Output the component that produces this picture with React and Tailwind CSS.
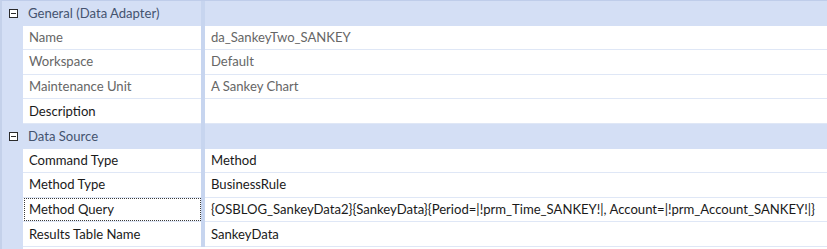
import React from 'react';

const sections = [
  {
    title: 'General (Data Adapter)',
    rows: [
      { label: 'Name', value: 'da_SankeyTwo_SANKEY', readOnly: true },
      { label: 'Workspace', value: 'Default', readOnly: true },
      { label: 'Maintenance Unit', value: 'A Sankey Chart', readOnly: true },
      { label: 'Description', value: '' },
    ],
  },
  {
    title: 'Data Source',
    rows: [
      { label: 'Command Type', value: 'Method' },
      { label: 'Method Type', value: 'BusinessRule' },
      {
        label: 'Method Query',
        value: '{OSBLOG_SankeyData2}{SankeyData}{Period=|!prm_Time_SANKEY!|, Account=|!prm_Account_SANKEY!|}',
        focused: true,
      },
      { label: 'Results Table Name', value: 'SankeyData' },
    ],
  },
];

const CollapseBox = () => (
  <span className="flex h-[9px] w-[9px] items-center justify-center border border-[#2b2b2b] bg-white">
    <span className="block h-[1px] w-[5px] bg-[#2b2b2b]" />
  </span>
);

const SectionHeader = ({ title }) => (
  <div className="flex h-[24.6px] bg-[#d4dff5]">
    <div className="flex w-[21px] shrink-0 items-center justify-center pl-[2px]">
      <CollapseBox />
    </div>
    <div className="flex w-[178px] shrink-0 items-center pl-[5px] text-[#44536f]">{title}</div>
    <div className="w-[4px] shrink-0 bg-[#c7d5ef]" />
    <div className="flex-1" />
  </div>
);

const PropertyRow = ({ label, value, readOnly, focused }) => {
  const textColor = readOnly ? 'text-[#666666]' : 'text-[#1a1a1a]';
  return (
    <div className="flex h-[24.6px] bg-[#d4dff5]">
      <div className="w-[21px] shrink-0" />
      <div className="flex w-[178px] shrink-0 bg-white border-b border-[#dfe7f6]">
        <div
          className={
            'flex flex-1 items-center ' +
            textColor +
            (focused ? ' border border-dotted border-[#3a3a3a] ml-[1px] pl-[4px]' : ' pl-[6px]')
          }
        >
          {label}
        </div>
      </div>
      <div className="w-[4px] shrink-0 bg-[#c7d5ef]" />
      <div className={'flex flex-1 items-center bg-white pl-[6px] border-b border-[#dfe7f6] whitespace-nowrap ' + textColor}>
        {value}
      </div>
    </div>
  );
};

export default function App() {
  return (
    <div
      className="h-[249px] w-[827px] overflow-hidden bg-white border-t border-[#bfcdea] border-l-2 border-l-[#c4d1ea] text-[13.1px] leading-none"
      style={{ fontFamily: '"Lato", "Liberation Sans", sans-serif' }}
    >
      {sections.map((s) => (
        <div key={s.title}>
          <SectionHeader title={s.title} />
          {s.rows.map((r) => (
            <PropertyRow key={r.label} {...r} />
          ))}
        </div>
      ))}
      <div className="flex h-[4px]">
        <div className="w-[21px] shrink-0 bg-[#d4dff5]" />
        <div className="flex-1 bg-white" />
      </div>
    </div>
  );
}
